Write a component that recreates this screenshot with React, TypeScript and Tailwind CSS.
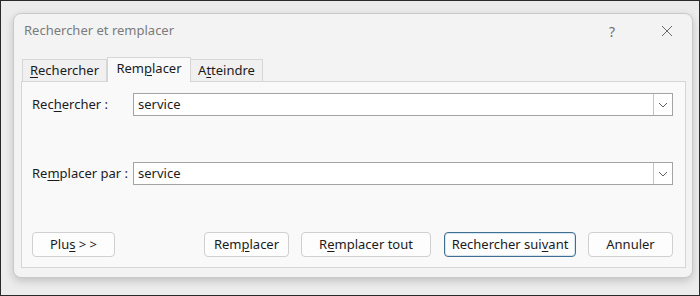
const font = { fontFamily: '"Segoe UI", "Noto Sans", "Open Sans", sans-serif' };

function U({ children }: { children: string }) {
  return <span className="underline underline-offset-[2px] decoration-[1px]">{children}</span>;
}

function Combo({ value }: { value: string }) {
  return (
    <div className="flex h-[23px] flex-1 items-center border border-[#a3a3a3] bg-white">
      <span className="flex-1 pl-[4px] text-[13px] leading-none text-[#1b1b1b]">{value}</span>
      <div className="flex h-[21px] w-[19px] items-center justify-center border-l border-[#c4c4c4]">
        <svg width="10" height="6" viewBox="0 0 10 6">
          <path d="M1 1 L5 5 L9 1" fill="none" stroke="#606060" strokeWidth="1" />
        </svg>
      </div>
    </div>
  );
}

function Btn({ children, w, primary }: { children: React.ReactNode; w: string; primary?: boolean }) {
  return (
    <button
      type="button"
      className={
        "flex h-[25px] items-center justify-center rounded-[4px] bg-[#fdfdfd] text-[13px] text-[#1b1b1b] " +
        w +
        (primary ? " border border-[#3f6f93] shadow-[inset_0_0_0_1px_#d8e4ee]" : " border border-[#d0d0d0]")
      }
    >
      {children}
    </button>
  );
}

export default function App() {
  return (
    <div style={font} className="h-[296px] w-[700px] border border-[#2a2a2a] bg-[#ececec] pl-[12px] pt-[12px]">
      <div className="flex h-[265px] w-[680px] flex-col rounded-[8px] border border-[#c9c9c9] bg-[#f3f3f3] shadow-[0_3px_8px_rgba(0,0,0,0.18)]">
        <div className="flex h-[34px] items-center pl-[10px]">
          <span className="flex-1 text-[13px] text-[#7b7b7b]">Rechercher et remplacer</span>
          <span className="mr-[46px] text-[14px] text-[#707070]">?</span>
          <svg width="12" height="12" viewBox="0 0 12 12" className="mr-[19px]">
            <path d="M1 1 L11 11 M11 1 L1 11" stroke="#6a6a6a" strokeWidth="1" />
          </svg>
        </div>

        <div className="mt-[9px] flex h-[24px] items-end pl-[8px]">
          <div className="flex h-[22px] w-[85px] items-center justify-center border border-b-0 border-[#d6d6d6] bg-[#f0f0f0] text-[13px] text-[#1b1b1b]">
            <U>R</U>echercher
          </div>
          <div className="relative z-10 -mb-px flex h-[25px] w-[84px] items-center justify-center border border-b-0 border-[#d6d6d6] bg-[#f9f9f9] pb-[3px] text-[13px] text-[#1b1b1b]">
            Rem<U>p</U>lacer
          </div>
          <div className="flex h-[22px] w-[72px] items-center justify-center border border-b-0 border-l-0 border-[#d6d6d6] bg-[#f0f0f0] text-[13px] text-[#1b1b1b]">
            A<U>t</U>teindre
          </div>
        </div>

        <div className="ml-[7px] flex h-[187px] w-[665px] flex-col border border-[#d6d6d6] bg-[#f9f9f9] pb-[10px] pl-[10px] pr-[12px] pt-[11px]">
          <div className="flex items-center">
            <span className="w-[101px] text-[13px] text-[#1b1b1b]">
              Rec<U>h</U>ercher :
            </span>
            <Combo value="service" />
          </div>
          <div className="mt-[46px] flex items-center">
            <span className="w-[101px] text-[13px] text-[#1b1b1b]">
              Re<U>m</U>placer par :
            </span>
            <Combo value="service" />
          </div>
          <div className="mt-auto flex items-center">
            <Btn w="w-[84px]">
              Plu<U>s</U>&nbsp;&gt; &gt;
            </Btn>
            <div className="ml-[89px]">
              <Btn w="w-[85px]">
                Rem<U>p</U>lacer
              </Btn>
            </div>
            <div className="ml-[12px]">
              <Btn w="w-[130px]">
                R<U>e</U>mplacer tout
              </Btn>
            </div>
            <div className="ml-[13px]">
              <Btn w="w-[132px]" primary>
                Rechercher sui<U>v</U>ant
              </Btn>
            </div>
            <div className="ml-[12px]">
              <Btn w="w-[85px]">Annuler</Btn>
            </div>
          </div>
        </div>
      </div>
    </div>
  );
}
